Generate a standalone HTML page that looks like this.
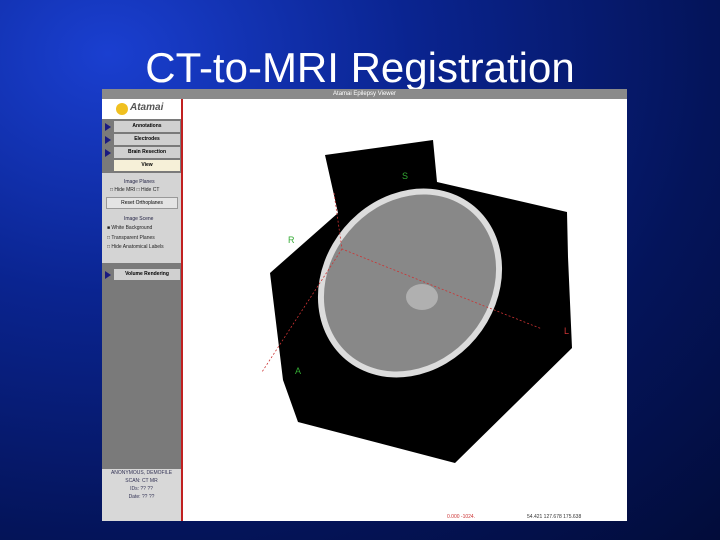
<!DOCTYPE html><html><head><style>
body{margin:0;width:720px;height:540px;overflow:hidden;background:radial-gradient(ellipse at 15% 10%,#1a3fd0 0%,#0a2490 35%,#04145a 70%,#020c3a 100%);font-family:"Liberation Sans",sans-serif;position:relative}
h1{position:absolute;top:44px;left:0;width:720px;text-align:center;margin:0;font-weight:normal;font-size:42px;color:#fff;line-height:48px}
.win{position:absolute;left:102px;top:89px;width:525px;height:432px;background:#fff}
.tb{position:absolute;left:0;top:0;width:525px;height:10px;background:#8a8a8a;font-size:6px;color:#fff;text-align:center;line-height:10px}
.pan{position:absolute;left:0;top:10px;width:79px;height:422px;background:#7a7a7a;border-right:2px solid #c02020}
.btn{position:absolute;left:12px;width:66px;height:11px;background:#d0d0d0;font-size:5px;text-align:center;line-height:11px;font-weight:bold}
.arr{position:absolute;left:3px;width:0;height:0;border-left:6px solid #1a1a80;border-top:4px solid transparent;border-bottom:4px solid transparent}
.t{position:absolute;font-size:5px;color:#222}
</style></head><body>
<h1>CT-to-MRI Registration</h1>
<div class="win">
<div class="tb">Atamai Epilepsy Viewer</div>
<div class="pan">
<div style="position:absolute;left:0;top:0;width:79px;height:20px;background:#fff"><div style="position:absolute;left:14px;top:4px;width:12px;height:12px;border-radius:50%;background:#f0c020"></div><div style="position:absolute;left:28px;top:3px;font-size:10px;font-style:italic;font-weight:bold;color:#555">Atamai</div></div>
<div class="arr" style="top:24px"></div><div class="btn" style="top:22px">Annotations</div>
<div class="arr" style="top:37px"></div><div class="btn" style="top:35px">Electrodes</div>
<div class="arr" style="top:50px"></div><div class="btn" style="top:48px">Brain Resection</div>
<div class="btn" style="top:61px;background:#f6f0d8">View</div>
<div style="position:absolute;left:0;top:74px;width:79px;height:90px;background:#d4d4d4"></div>
<div class="t" style="top:80px;left:22px;color:#224">Image Planes</div>
<div class="t" style="top:88px;left:8px">□ Hide MRI □ Hide CT</div>
<div style="position:absolute;left:4px;top:98px;width:70px;height:10px;background:#e4e4e4;border:1px solid #999;font-size:5px;text-align:center;line-height:10px">Reset Orthoplanes</div>
<div class="t" style="top:117px;left:22px;color:#224">Image Scene</div>
<div class="t" style="top:126px;left:5px">■ White Background</div>
<div class="t" style="top:136px;left:5px">□ Transparent Planes</div>
<div class="t" style="top:145px;left:5px">□ Hide Anatomical Labels</div>
<div class="arr" style="top:172px"></div><div class="btn" style="top:170px">Volume Rendering</div>
<div style="position:absolute;left:0;top:370px;width:79px;height:52px;background:#d8d8d8;font-size:5px;text-align:center;line-height:8px;color:#335">ANONYMOUS, DEMOFILE<br>SCAN: CT MR<br>IDs: ?? ??<br>Date: ?? ??</div>
</div>
<svg style="position:absolute;left:0;top:0" width="525" height="432">
<polygon points="168,184 236,124 223,66 331,51 335,93 465,123 466,168 470,259 353,374 196,333 181,291" fill="#000"/>
<ellipse cx="308" cy="194" rx="100" ry="86" transform="rotate(-50 308 194)" fill="#dcdcdc"/>
<ellipse cx="308" cy="194" rx="94" ry="80" transform="rotate(-50 308 194)" fill="#888"/>
<ellipse cx="320" cy="208" rx="16" ry="13" fill="#b0b0b0"/>
<path d="M232,104 L240,160 L332,197 L440,240 M240,160 L160,283" stroke="#c33" stroke-width="0.8" stroke-dasharray="2,2" fill="none"/>
<text x="300" y="90" font-size="9" fill="#3a3">S</text>
<text x="186" y="154" font-size="9" fill="#3a3">R</text>
<text x="462" y="245" font-size="9" fill="#c33">L</text>
<text x="193" y="285" font-size="9" fill="#3a3">A</text>
<text x="345" y="429" font-size="5" fill="#c33">0.000 -1024.</text>
<text x="425" y="429" font-size="5" fill="#333">54.421 127.678 175.638</text>
</svg>
</div>
</body></html>
